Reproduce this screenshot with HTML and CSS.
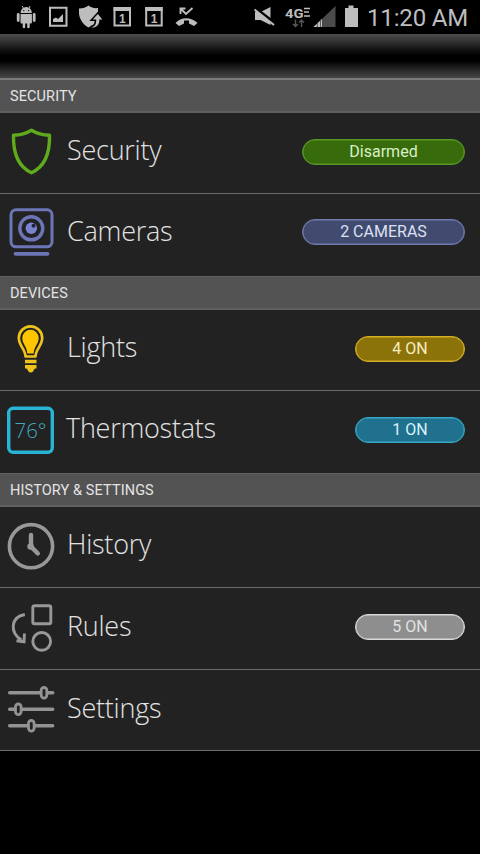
FILE: index.html
```html
<!DOCTYPE html>
<html lang="en">
<head>
<meta charset="utf-8">
<title>Home</title>
<link rel="stylesheet" href="styles.css">
</head>
<body>
<div class="status">
  <svg class="notifications" width="240" height="34" viewBox="0 0 240 34" fill="#bdbdbd">
    <path d="M20.500 13a5.700 6 0 0 1 11.400 0zM20.500 14h11.400v8.500a1 1 0 0 1-1 1h-1.200V27a1.200 1.200 0 0 1-2.500 0v-3.500h-2V27a1.200 1.200 0 0 1-2.500 0v-3.500h-1.200a1 1 0 0 1-1-1z"/>
    <path d="M18.200 14.500v6M34.200 14.500v6" stroke="#bdbdbd" stroke-width="2.800" stroke-linecap="round"/>
    <path d="M22.300 6l1.500 3M30.100 6l-1.500 3" stroke="#bdbdbd"/>
    <circle cx="23.800" cy="10.600" r=".7" fill="#000"/><circle cx="28.600" cy="10.600" r=".7" fill="#000"/>
    <path d="M50 7.800h16.500v18H50z" fill="none" stroke="#bdbdbd" stroke-width="2"/>
    <path d="M53 22v-3l3-1.500 2 1.500 5-5v8z"/>
    <path d="M88.500 5.500c3 2.200 6 3 9.500 2.500v14l-9.500 5.500c-6-3-9-9-9.500-14V8.500c4 0 7-1 9.500-3z"/>
    <path d="M91 27.500c4-1 5.200-3 5.200-8h-3.400l5-5.500 4.600 5.500h-3c0 5.500-3 8.500-8.400 8z" stroke="#000" stroke-width="3"/>
    <path d="M91 27.500c4-1 5.200-3 5.200-8h-3.400l5-5.500 4.600 5.500h-3c0 5.500-3 8.500-8.400 8z"/>
    <path d="M114.500 8h15.500v17.500h-15.500zM146.200 8h15.500v17.500h-15.500z" fill="none" stroke="#bdbdbd" stroke-width="2"/>
    <path d="M113.500 7h17.500v4h-17.500zM145.200 7h17.500v4h-17.500z"/>
    <text class="day" x="122.300" y="23.200">1</text><text class="day" x="154" y="23.200">1</text>
    <path d="M175.500 23c5-6.500 16-6.500 22 0l-3.500 3-5-2.500v-3h-5v3l-5 2.500z"/>
    <path d="M180.500 14V8.500h5M181 9l5 5 6.500-6" fill="none" stroke="#bdbdbd" stroke-width="1.900"/>
  </svg>
  <svg class="radios" width="120" height="34" viewBox="240 0 120 34" fill="#bdbdbd">
    <path d="M255 12h5.500l10-5v18l-10-5H255z"/>
    <path d="M254.500 7.500l20 15.500" stroke="#000" stroke-width="3"/>
    <path d="M254.500 9.500l19.500 15.500" stroke="#bdbdbd" stroke-width="2"/>
    <text class="net" x="285" y="17.500" textLength="18.500" lengthAdjust="spacingAndGlyphs">4G</text>
    <path d="M304 8.500h6M304 12h5M304 16h6" stroke="#bdbdbd" stroke-width="1.500"/>
    <path d="M295.500 19.500v7M293 24l2.500 2.500 2.500-2.500M301.500 27v-7M299 22.500l2.500-2.500 2.500 2.500" stroke="#555" fill="none" stroke-width="1.500"/>
    <path d="M313.500 27l22-21v21z" fill="#4b4b4b"/>
    <path d="M313.500 27l8.500-8v8z"/>
    <path d="M317.300 22v5M320.500 19v8" stroke="#333" stroke-width=".7"/>
    <path d="M345 8h3.500V5.500h5V8h4.500v19H345z"/>
  </svg>
  <div class="clock">11:20 AM</div>
</div>
<div class="shade"></div>
<main>
  <h2 class="section first">SECURITY</h2>
  <div class="row">
    <svg class="icon" viewBox="0 0 64 80" fill="none" stroke="#5fab1c" stroke-width="3.400" stroke-linejoin="round"><path d="M31.500 17.200C26 20.500 20 22 13.500 22.300c-.5 19.500 5 31.500 18 37.500 13-6 18.500-18 18-37.500-6.500-.3-12.500-1.800-18-5.100z"/></svg>
    <div class="name">Security</div><div class="pill wide green">Disarmed</div>
  </div>
  <div class="row cams">
    <svg class="icon" viewBox="0 0.7 64 80" fill="none" stroke="#6c76b6" stroke-width="3"><rect x="11" y="16.500" width="41" height="37" rx="5"/><circle cx="31.300" cy="35" r="11.500" stroke-width="3.400"/><path d="M15.500 60.500h32" stroke-width="3.800" stroke-linecap="round"/><circle cx="31.300" cy="35" r="5.700" fill="#7784cf" stroke="none"/><circle cx="33.500" cy="32.500" r="2" fill="#20243b" stroke="none"/></svg>
    <div class="name">Cameras</div><div class="pill wide blue">2 CAMERAS</div>
  </div>
  <h2 class="section">DEVICES</h2>
  <div class="row">
    <svg class="icon" viewBox="0 0 64 80" fill="none" stroke="#efc31b" stroke-width="2.700"><path d="M25.500 46.500c0-7-6.700-11-6.700-18.500a11.700 11.700 0 0 1 23.400 0c0 7.500-6.700 11.500-6.700 18.500z" stroke-linejoin="round"/><path d="M27.300 43.500c0-6.500-5-9.500-5-15.500a8.200 8.200 0 0 1 16.400 0c0 6-5 9-5 15.500z" fill="#ffc600" stroke="none"/><path d="M25 51.500h11.500M25 56.800h11.500" stroke-width="3.400"/><path d="M26.500 58h8.500l-2 3.500a3 3 0 0 1-4.500 0z" fill="#efc31b" stroke="none"/></svg>
    <div class="name">Lights</div><div class="pill yellow">4 ON</div>
  </div>
  <div class="row thermo">
    <svg class="icon" viewBox="0 0 64 80" fill="none"><rect x="8.700" y="17.300" width="43.600" height="44" rx="4.500" stroke="#29b4d5" stroke-width="3.400"/><text class="temp" x="14.500" y="46.700" textLength="32" lengthAdjust="spacingAndGlyphs">76°</text></svg>
    <div class="name long">Thermostats</div><div class="pill cyan">1 ON</div>
  </div>
  <h2 class="section">HISTORY &amp; SETTINGS</h2>
  <div class="row">
    <svg class="icon" viewBox="0 0 64 80" fill="none" stroke="#989898"><circle cx="31" cy="39.200" r="21.600" stroke-width="3.600"/><path d="M31 28v11.500l6.800 7" stroke-width="4.400" stroke-linecap="round"/><circle cx="30.600" cy="39.500" r="3.300" fill="#989898" stroke="none"/></svg>
    <div class="name">History</div>
  </div>
  <div class="row rules">
    <svg class="icon" viewBox="0 0 64 80" fill="none" stroke="#989898" stroke-width="2.900"><rect x="32.800" y="17.700" width="18" height="18" rx="1.800"/><circle cx="41.700" cy="53.400" r="8.900"/><path d="M24.800 26.500C10.500 29 9.500 44.500 21.500 52M24.500 45.500l-.5 8.300-7.500-1"/></svg>
    <div class="name">Rules</div><div class="pill gray">5 ON</div>
  </div>
  <div class="row">
    <svg class="icon" viewBox="0 0 64 80" fill="#222" stroke="#939393" stroke-width="3.500" stroke-linecap="round"><path d="M9.700 22.800h43M9.700 39.200h43M9.700 55.800h43"/><g stroke-width="2.800"><rect x="41.200" y="17.500" width="5.600" height="10.600" rx="2.800"/><rect x="15.500" y="34" width="5.600" height="10.600" rx="2.800"/><rect x="28.500" y="50.500" width="5.600" height="10.600" rx="2.800"/></g></svg>
    <div class="name">Settings</div>
  </div>
</main>
</body>
</html>
```
FILE: styles.css
```css
* { box-sizing: border-box; }
body { margin: 0; background: #000; color: #e0e0e0; font-family: Roboto, sans-serif; }
.status { display: flex; height: 34px; background: #000; }
.status svg { display: block; flex: none; }
.clock { padding-left: 7px; font-size: 24px; line-height: 36px; color: #bdbdbd; white-space: nowrap; letter-spacing: -.15px; }
.day { font: bold 12px "Liberation Sans", sans-serif; text-anchor: middle; }
.net { font: bold 13px Roboto, sans-serif; }
.shade { height: 44px; background: linear-gradient(#4d4d4d 0, #303030 8px, #141414 15px, #000 22px, #000 27px, #202020 34px, #474747 44px); }
.section { height: 34px; margin: 0; padding-left: 10px; background: #535353; border-top: 1px solid #626262; border-bottom: 2px solid #606060; font-size: 14.5px; font-weight: 400; line-height: 34px; letter-spacing: .1px; color: #e4e4e4; }
.first { height: 35px; border-top: 2px solid #7b7b7b; }
.row { display: flex; height: 81px; background: #222; border-bottom: 1px solid #6c6c6c; padding-right: 15px; }
.row:has(+ .section) { border-bottom: 0; }
.row.cams, .row.thermo, .row.rules { height: 82px; }
.icon { flex: none; width: 64px; height: 80px; display: block; }
.name { flex: 1; padding-left: 3px; font-family: "Open Sans", sans-serif; font-weight: 300; font-size: 27px; line-height: 74px; letter-spacing: -.25px; color: #e2e2e2; }
.name.long { padding-left: 2px; }
.rules .name { line-height: 76px; }
.row:last-child .name { line-height: 75px; }
.cams .name { line-height: 73px; }
.pill { width: 110px; height: 26px; margin-top: 26px; border: 1px solid; border-radius: 13px; text-align: center; font-size: 16px; line-height: 24px; }
.cams .pill { margin-top: 25px; }
.wide { width: 163px; }
.green { background: #386b0c; border-color: #579923; box-shadow: inset 0 0 0 .5px #579923; color: #d8f0c5; }
.blue { background: #414b70; border-color: #717bb0; box-shadow: inset 0 0 0 .5px #717bb0; color: #dde0f2; }
.yellow { background: #8b7309; border-color: #d5ae21; box-shadow: inset 0 0 0 .5px #d5ae21; color: #f7edc4; }
.cyan { background: #20718e; border-color: #36a7c7; box-shadow: inset 0 0 0 .5px #36a7c7; color: #d9f2fa; }
.gray { background: #8e8e8e; border-color: #d8d8d8; box-shadow: inset 0 0 0 .5px #d8d8d8; color: #e2e2e2; }
.temp { font: 300 21px "Open Sans", sans-serif; fill: #3eaac1; }
```
